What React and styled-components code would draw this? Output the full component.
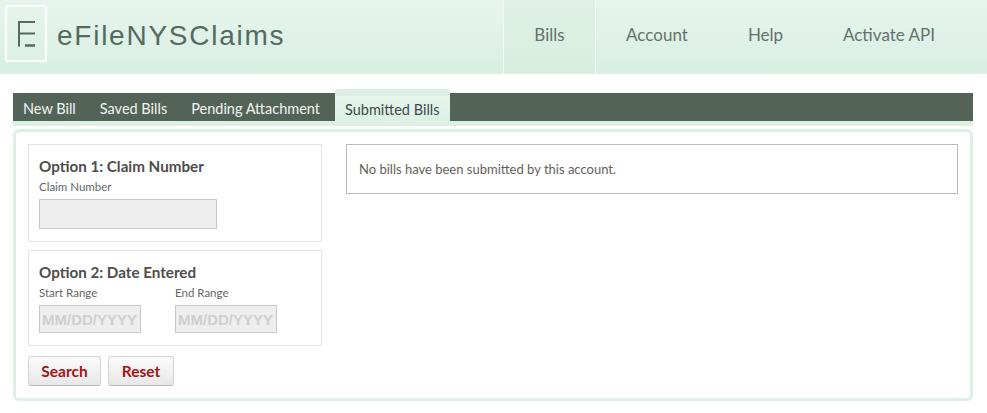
import React from 'react'
import styled, { createGlobalStyle } from 'styled-components'

const GlobalStyle = createGlobalStyle`
	body {
		margin: 0;
		background: #fff;
		font-family: Lato, 'Open Sans', sans-serif;
		color: #555;
	}
`

const Header = styled.header`
	height: 74px;
	display: flex;
	justify-content: space-between;
	background: linear-gradient(to bottom, #e7f5ed, #d9efe2);
`

const Brand = styled.div`
	display: flex;
	align-items: center;
	gap: 10px;
	padding: 5px 0 12px 5px;
`

const LogoBox = styled.div`
	width: 38px;
	height: 53px;
	border: 2px solid #fff;
	border-radius: 1px;
	display: flex;
	align-items: center;
	justify-content: center;
`

const Title = styled.div`
	margin-top: 4px;
	font-family: 'Liberation Sans', Arial, sans-serif;
	font-size: 28px;
	letter-spacing: 1.75px;
	color: #566a5e;
`

const Nav = styled.nav`
	display: flex;
	margin-right: 22px;
`

const NavItem = styled.a`
	display: flex;
	align-items: center;
	justify-content: center;
	width: ${p => p.$width}px;
	box-sizing: border-box;
	padding-bottom: 6px;
	font-size: 17px;
	color: #66706c;
	border-left: ${p => (p.$active ? '1px solid #f2faf5' : '0')};
	border-right: ${p => (p.$active ? '1px solid #f2faf5' : '0')};
	background: ${p => (p.$active ? 'linear-gradient(to bottom, #dff1e6, #d8ede0)' : 'none')};
`

const Main = styled.main`
	margin: 19px 14px 0 13px;
`

const TabBar = styled.div`
	height: 28px;
	display: flex;
	padding-left: 1px;
	background: #536358;
	border-bottom: 5px solid #dcf0e4;
`

const Tab = styled.a`
	display: flex;
	align-items: center;
	height: 28px;
	padding: 2px 9px 0;
	margin-right: 6px;
	box-sizing: border-box;
	font-size: 14.5px;
	color: #f1f5f2;
`

const ActiveTab = styled(Tab)`
	height: 32px;
	margin: -4px 0 0 0;
	padding: 1px 10px 0;
	border-top: 7px solid #dcefe3;
	border-radius: 2px 2px 0 0;
	color: #3f4a45;
	background: linear-gradient(to bottom, #e6f5ec, #dcf0e4);
`

const Panel = styled.section`
	margin-top: 3px;
	height: 272px;
	box-sizing: border-box;
	padding: 12px 12px 0 12px;
	border: 3px solid #dcf0e4;
	border-radius: 6px;
	display: flex;
	gap: 24px;
	align-items: flex-start;
`

const SearchColumn = styled.div`
	width: 294px;
	flex: none;
	display: flex;
	flex-direction: column;
	gap: 8px;
`

const OptionBox = styled.div`
	border: 1px solid #e4e4e4;
	padding: 12px 10px 0 10px;
	height: ${p => p.$height}px;
	box-sizing: border-box;
`

const OptionTitle = styled.h3`
	margin: 0;
	font-size: 15.2px;
	line-height: 18px;
	font-weight: 700;
	color: #4d4d4d;
`

const Field = styled.div`
	display: flex;
	flex-direction: column;
`

const FieldLabel = styled.label`
	font-size: 11.5px;
	line-height: 14px;
	margin-top: 5px;
	margin-bottom: 5px;
	color: #666;
`

const TextInput = styled.input`
	width: ${p => p.$width}px;
	height: ${p => p.$height}px;
	box-sizing: border-box;
	padding: 0 2px;
	border: 1px solid #c8c8c8;
	background: #eee;
	font-family: 'Liberation Sans', Arial, sans-serif;
	font-size: 15px;
	font-weight: 700;
	&::placeholder {
		color: #cfcfcf;
		opacity: 1;
	}
`

const DateRow = styled.div`
	display: flex;
	gap: 34px;
`

const Buttons = styled.div`
	display: flex;
	gap: 7px;
	margin-top: 2px;
`

const Button = styled.button`
	width: ${p => p.$width}px;
	height: 30px;
	padding: 0;
	border: 1px solid #d4d4d4;
	border-bottom-color: #b8b8b8;
	border-radius: 3px;
	background: linear-gradient(to bottom, #fbfbfb, #e8e8e8);
	font-family: Lato, 'Open Sans', sans-serif;
	font-size: 15.5px;
	font-weight: 700;
	color: #a31515;
`

const Notice = styled.div`
	flex: 1;
	height: 50px;
	box-sizing: border-box;
	display: flex;
	align-items: center;
	padding-left: 12px;
	border: 1px solid #bbb;
	font-size: 13px;
	color: #66605c;
`

function Logo() {
	return (
		<svg width="17" height="26" viewBox="0 0 17 26">
			<path d="M1 1H17M1 0V25.5M1 12.5H17" stroke="#566a5e" strokeWidth="2" fill="none" />
			<path d="M7 24.5H17" stroke="#566a5e" strokeWidth="2.5" fill="none" />
		</svg>
	)
}

function App() {
	return (
		<>
			<GlobalStyle />
			<Header>
				<Brand>
					<LogoBox>
						<Logo />
					</LogoBox>
					<Title>eFileNYSClaims</Title>
				</Brand>
				<Nav>
					<NavItem $active $width={93}>Bills</NavItem>
					<NavItem $width={122}>Account</NavItem>
					<NavItem $width={95}>Help</NavItem>
					<NavItem $width={152}>Activate API</NavItem>
				</Nav>
			</Header>
			<Main>
				<TabBar>
					<Tab>New Bill</Tab>
					<Tab>Saved Bills</Tab>
					<Tab>Pending Attachment</Tab>
					<ActiveTab>Submitted Bills</ActiveTab>
				</TabBar>
				<Panel>
					<SearchColumn>
						<OptionBox $height={98}>
							<OptionTitle>Option 1: Claim Number</OptionTitle>
							<Field>
								<FieldLabel>Claim Number</FieldLabel>
								<TextInput $width={178} $height={30} />
							</Field>
						</OptionBox>
						<OptionBox $height={96}>
							<OptionTitle>Option 2: Date Entered</OptionTitle>
							<DateRow>
								<Field>
									<FieldLabel>Start Range</FieldLabel>
									<TextInput $width={102} $height={28} placeholder="MM/DD/YYYY" />
								</Field>
								<Field>
									<FieldLabel>End Range</FieldLabel>
									<TextInput $width={102} $height={28} placeholder="MM/DD/YYYY" />
								</Field>
							</DateRow>
						</OptionBox>
						<Buttons>
							<Button $width={73}>Search</Button>
							<Button $width={66}>Reset</Button>
						</Buttons>
					</SearchColumn>
					<Notice>No bills have been submitted by this account.</Notice>
				</Panel>
			</Main>
		</>
	)
}

export default App
